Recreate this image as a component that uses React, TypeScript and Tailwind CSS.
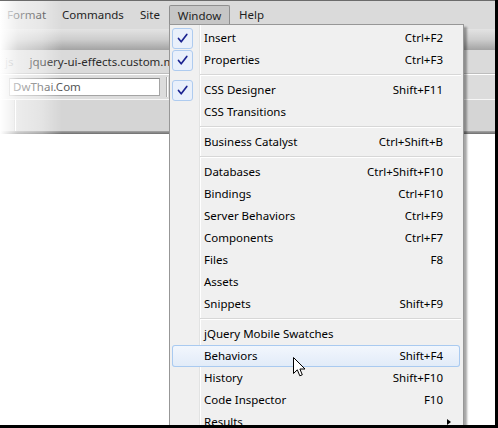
import clsx from "clsx";

type Item =
  | { sep: true }
  | { sep?: false; label: string; keys?: string; checked?: boolean; active?: boolean; sub?: boolean };

const items: Item[] = [
  { label: "Insert", keys: "Ctrl+F2", checked: true },
  { label: "Properties", keys: "Ctrl+F3", checked: true },
  { sep: true },
  { label: "CSS Designer", keys: "Shift+F11", checked: true },
  { label: "CSS Transitions" },
  { sep: true },
  { label: "Business Catalyst", keys: "Ctrl+Shift+B" },
  { sep: true },
  { label: "Databases", keys: "Ctrl+Shift+F10" },
  { label: "Bindings", keys: "Ctrl+F10" },
  { label: "Server Behaviors", keys: "Ctrl+F9" },
  { label: "Components", keys: "Ctrl+F7" },
  { label: "Files", keys: "F8" },
  { label: "Assets" },
  { label: "Snippets", keys: "Shift+F9" },
  { sep: true },
  { label: "jQuery Mobile Swatches" },
  { label: "Behaviors", keys: "Shift+F4", active: true },
  { label: "History", keys: "Shift+F10" },
  { label: "Code Inspector", keys: "F10" },
  { label: "Results", sub: true },
];

function Check() {
  return (
    <span className="flex h-[21px] w-[21px] shrink-0 items-center justify-center rounded-[3px] border border-[#aecbef] bg-[#e9f0fb]">
      <svg width="21" height="21" viewBox="0 0 21 21" className="-m-px">
        <path d="M6.5 10.5 L9.2 13.8 L14.8 6.5" fill="none" stroke="#1b2390" strokeWidth="1.7" strokeLinecap="round" strokeLinejoin="round" />
      </svg>
    </span>
  );
}

function Cursor() {
  return (
    <svg width="14" height="21" viewBox="0 0 14 21" className="pointer-events-none absolute left-[293px] top-[356px] z-20">
      <path d="M0.5 0.5 L0.5 16.5 L4.3 12.8 L6.8 18.8 L9.3 17.8 L6.9 12 L12 12 Z" fill="#fff" stroke="#000" strokeWidth="1" strokeLinejoin="miter" />
    </svg>
  );
}

function WindowMenu() {
  return (
    <div className="absolute left-[169px] top-[23px] z-10 w-[295px] border border-[#979797] bg-[linear-gradient(to_right,#f0f0f0_29px,#e2e3e3_29px,#e2e3e3_30px,#ffffff_30px,#ffffff_31px,#f0f0f0_31px)] pt-[2px] pb-[6px] text-black shadow-[3px_3px_2px_rgba(0,0,0,0.35)]">
      {items.map((it, i) =>
        it.sep ? (
          <div key={i} className="flex h-[8px] items-center pl-[30px] pr-[2px]">
            <div className="h-[2px] w-full border-t border-b border-t-[#d7d7d7] border-b-white" />
          </div>
        ) : (
          <div key={i} className="h-[22px] pl-[2px] pr-[3px]">
            <div
              className={clsx(
                "flex h-full items-center rounded-[3px]",
                it.active && "bg-gradient-to-b from-[#f3f7fd] to-[#e1ebf8] shadow-[inset_0_0_0_1px_#a9caf0]"
              )}
            >
              <span className="flex h-[21px] w-[21px] shrink-0 items-center">{it.checked && <Check />}</span>
              <span className="ml-[11px] flex-1 whitespace-nowrap">{it.label}</span>
              {it.keys && <span className="whitespace-nowrap pr-[17px]">{it.keys}</span>}
              {it.sub && (
                <span className="mr-[9px] h-0 w-0 border-y-[3.5px] border-l-[4px] border-y-transparent border-l-black" />
              )}
            </div>
          </div>
        )
      )}
    </div>
  );
}

export default function App() {
  return (
    <div className="h-[428px] w-[498px] border-r-[3px] border-b-[3px] border-black bg-white text-[11.5px] leading-none [font-family:'Noto_Sans','Open_Sans',sans-serif]">
      <div className="relative h-full w-full overflow-hidden border-t border-[#6b6b6b]">
        {/* menubar */}
        <div className="flex h-[28px] items-start bg-[#dadada] pt-[4px] text-[#1e1e1e]">
          <div className="flex h-[19px] w-[53px] items-center pl-[7px]">Format</div>
          <div className="flex h-[19px] w-[78px] items-center pl-[9px]">Commands</div>
          <div className="flex h-[19px] w-[38px] items-center pl-[9px]">Site</div>
          <div className="flex h-[20px] w-[61px] items-center justify-center rounded-t-[2px] border border-b-0 border-[#8f8f8f] bg-[#c6c6c6]">
            Window
          </div>
          <div className="flex h-[19px] items-center pl-[9px]">Help</div>
        </div>
        {/* panel strip */}
        <div className="h-[21px] bg-gradient-to-b from-[#e3e3e3] via-[#cdcdcd] to-[#a3a3a3]" />
        {/* document tabs */}
        <div className="flex h-[24px] items-center border-b border-[#bdbdbd] bg-[#dadada] text-[#2a2a2a]">
          <span className="pl-[5px] text-[#888]">js</span>
          <span className="whitespace-nowrap pl-[16px]">jquery-ui-effects.custom.min.js</span>
        </div>
        {/* address row */}
        <div className="flex h-[25px] items-center border-t border-white bg-[#dcdcdc] pl-[9px]">
          <div className="flex h-[18px] w-[151px] items-center border border-[#a4a4a4] border-t-[#8c8c8c] bg-white pl-[3px] text-[#555]">
            DwThai.Com
          </div>
          <div className="ml-[6px] h-[20px] w-[2px] border-l border-r border-l-[#a9a9a9] border-r-white" />
        </div>
        {/* toolbar */}
        <div className="flex h-[32px] border-t border-[#f6f6f6] bg-[#d5d5d5]">
          <div className="w-[14px]" />
          <div className="w-[2px] border-l border-r border-l-[#c4c4c4] border-r-white" />
        </div>
        <div className="h-[3px] bg-gradient-to-b from-[#a8a8a8] to-[#6e6e6e]" />

        {/* fade on the left edge */}
        <div className="pointer-events-none absolute inset-y-0 left-0 w-[62px] bg-[linear-gradient(to_right,rgba(255,255,255,1)_0px,rgba(255,255,255,0.55)_18px,rgba(255,255,255,0.35)_42px,rgba(255,255,255,0)_62px)]" />

        <WindowMenu />
        <Cursor />
      </div>
    </div>
  );
}
